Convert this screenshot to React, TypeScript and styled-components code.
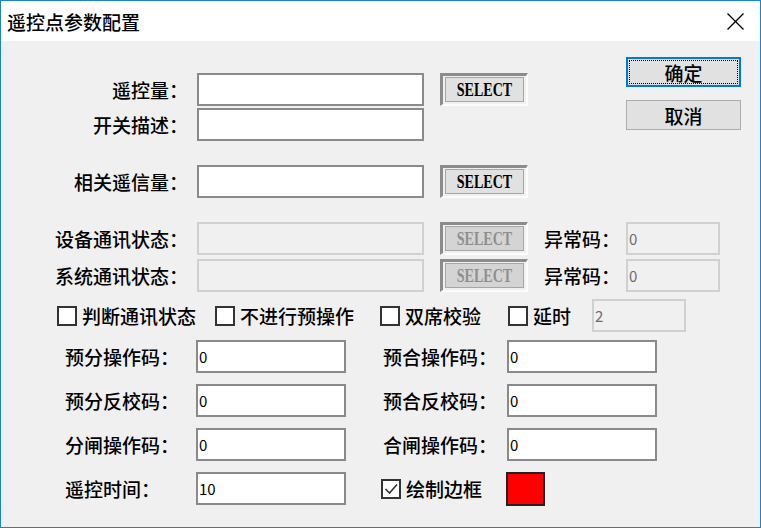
import React from "react";
import styled, { createGlobalStyle } from "styled-components";

const Global = createGlobalStyle`
  html, body { margin: 0; padding: 0; background: #fff; overflow: hidden; }
  body { font-family: "Noto Sans CJK SC", "Noto Sans", sans-serif; }
  * { box-sizing: border-box; }
`;

const CJK = `"Noto Sans CJK SC", "Noto Sans", sans-serif`;

const Window = styled.div`
  width: 761px;
  height: 528px;
  border: 1px solid #1883d7;
  background: #f0f0f0;
  display: flex;
  flex-direction: column;
  color: #000;
  font-family: ${CJK};
  font-weight: 500;
`;

const TitleBar = styled.div`
  height: 40px;
  flex-shrink: 0;
  background: #fff;
  display: flex;
  align-items: center;
  justify-content: space-between;
  padding: 0 16px 0 6px;
`;

const Title = styled.span`
  font-size: 19px;
  line-height: 1;
`;

const CloseIcon = styled.svg`
  width: 17px;
  height: 17px;
  display: block;
`;

const Body = styled.div`
  flex: 1;
  display: flex;
  flex-direction: column;
`;

const TopBlock = styled.div`
  display: flex;
  align-items: flex-start;
`;

const LeftRows = styled.div`
  display: flex;
  flex-direction: column;
  padding-top: 32px;
`;

const ButtonCol = styled.div`
  display: flex;
  flex-direction: column;
  gap: 13px;
  padding-top: 16px;
  margin-left: 98px;
`;

const Row = styled.div<{ $mt?: number; $pl?: number }>`
  display: flex;
  align-items: center;
  height: 33px;
  margin-top: ${(p) => p.$mt ?? 0}px;
  padding-left: ${(p) => p.$pl ?? 0}px;
`;

const Label = styled.span<{ $w: number; $align?: "left" | "right"; $ml?: number }>`
  flex: 0 0 ${(p) => p.$w}px;
  width: ${(p) => p.$w}px;
  margin-left: ${(p) => p.$ml ?? 0}px;
  text-align: ${(p) => p.$align ?? "left"};
  font-size: 19px;
  line-height: 33px;
  white-space: nowrap;
`;

const Field = styled.input<{ $w: number; $ml?: number }>`
  flex: 0 0 ${(p) => p.$w}px;
  width: ${(p) => p.$w}px;
  height: 33px;
  margin: 0 0 0 ${(p) => p.$ml ?? 0}px;
  border: 2px solid ${(p) => (p.disabled ? "#d0d0d0" : "#8a8a8a")};
  background: ${(p) => (p.disabled ? "#f0f0f0" : "#fff")};
  color: ${(p) => (p.disabled ? "#6d6d6d" : "#000")};
  font-family: ${CJK};
  font-weight: 400;
  font-size: 15px;
  padding: 0 0 0 1px;
  outline: none;
  border-radius: 0;
`;

const SelectFrame = styled.div<{ $ml?: number }>`
  flex: 0 0 88px;
  width: 88px;
  height: 33px;
  margin-left: ${(p) => p.$ml ?? 0}px;
  border-style: solid;
  border-width: 3px 2px 2px 3px;
  border-color: #8c8c8c #fcfcfc #fcfcfc #8c8c8c;
  padding: 1px 2px 2px 2px;
  display: flex;
`;

const SelectInner = styled.div<{ $disabled?: boolean }>`
  flex: 1;
  border: 1px solid #a6a6a6;
  background: ${(p) => (p.$disabled ? "#d4d4d4" : "#e1e1e1")};
  color: ${(p) => (p.$disabled ? "#8f8f8f" : "#000")};
  display: flex;
  align-items: center;
  justify-content: center;
  overflow: hidden;
`;

const SelectText = styled.span`
  display: inline-block;
  font-family: "Liberation Serif", "Times New Roman", serif;
  font-weight: bold;
  font-size: 18px;
  line-height: 1;
  transform: scaleX(0.78);
  white-space: nowrap;
`;

const DialogButton = styled.button<{ $default?: boolean }>`
  position: relative;
  width: 115px;
  height: 30px;
  padding: 0;
  border: ${(p) => (p.$default ? "2px solid #0078d7" : "1px solid #adadad")};
  background: #e1e1e1;
  font-family: ${CJK};
  font-weight: 500;
  font-size: 19px;
  color: #000;
  display: flex;
  align-items: center;
  justify-content: center;
  border-radius: 0;
  &::after {
    content: "";
    display: ${(p) => (p.$default ? "block" : "none")};
    position: absolute;
    inset: 1px;
    border: 1px dotted #000;
  }
`;

const CheckItem = styled.label<{ $w?: number }>`
  flex: 0 0 ${(p) => (p.$w ? `${p.$w}px` : "auto")};
  display: flex;
  align-items: center;
  gap: 5px;
  font-size: 19px;
  white-space: nowrap;
`;

const Box = styled.span`
  width: 20px;
  height: 20px;
  flex-shrink: 0;
  border: 2px solid #333;
  background: #fff;
  display: flex;
  align-items: center;
  justify-content: center;
`;

const BottomGrid = styled.div`
  display: grid;
  grid-template-columns: 131px 150px 37px 124px 150px;
  grid-template-rows: repeat(4, 33px);
  row-gap: 11px;
  align-items: center;
  margin-top: 8px;
  padding-left: 64px;
`;

const Spacer = styled.span``;

const LastCell = styled.div`
  grid-column: 4 / 6;
  display: flex;
  align-items: center;
  margin-left: -2px;
`;

const Swatch = styled.span`
  width: 39px;
  height: 34px;
  border: 2px solid #222;
  background: #ff0000;
`;

const Check = ({ checked }: { checked?: boolean }) => (
  <Box>
    {checked && (
      <svg width="16" height="16" viewBox="0 0 16 16">
        <polyline points="2.5,8 6.5,12 14,3.5" fill="none" stroke="#333" strokeWidth="1.6" />
      </svg>
    )}
  </Box>
);

const Select = ({ disabled, ml }: { disabled?: boolean; ml?: number }) => (
  <SelectFrame $ml={ml}>
    <SelectInner $disabled={disabled}>
      <SelectText>SELECT</SelectText>
    </SelectInner>
  </SelectFrame>
);

export default function App() {
  return (
    <>
      <Global />
      <Window>
        <TitleBar>
          <Title>遥控点参数配置</Title>
          <CloseIcon viewBox="0 0 17 17">
            <line x1="0.5" y1="0.5" x2="16.5" y2="16.5" stroke="#000" strokeWidth="1.2" />
            <line x1="16.5" y1="0.5" x2="0.5" y2="16.5" stroke="#000" strokeWidth="1.2" />
          </CloseIcon>
        </TitleBar>
        <Body>
          <TopBlock>
            <LeftRows>
              <Row>
                <Label $w={187} $align="right">遥控量：</Label>
                <Field $w={227} $ml={9} readOnly value="" />
                <Select ml={16} />
              </Row>
              <Row $mt={2}>
                <Label $w={187} $align="right">开关描述：</Label>
                <Field $w={227} $ml={9} readOnly value="" />
              </Row>
              <Row $mt={24}>
                <Label $w={187} $align="right">相关遥信量：</Label>
                <Field $w={227} $ml={9} readOnly value="" />
                <Select ml={16} />
              </Row>
            </LeftRows>
            <ButtonCol>
              <DialogButton $default>确定</DialogButton>
              <DialogButton>取消</DialogButton>
            </ButtonCol>
          </TopBlock>

          <Row $mt={24}>
            <Label $w={187} $align="right">设备通讯状态：</Label>
            <Field $w={227} $ml={9} disabled value="" readOnly />
            <Select ml={16} disabled />
            <Label $w={82} $ml={16}>异常码：</Label>
            <Field $w={94} disabled value="0" readOnly />
          </Row>
          <Row $mt={4}>
            <Label $w={187} $align="right">系统通讯状态：</Label>
            <Field $w={227} $ml={9} disabled value="" readOnly />
            <Select ml={16} disabled />
            <Label $w={82} $ml={16}>异常码：</Label>
            <Field $w={94} disabled value="0" readOnly />
          </Row>

          <Row $mt={7} $pl={56}>
            <CheckItem $w={158}>
              <Check />
              判断通讯状态
            </CheckItem>
            <CheckItem $w={165}>
              <Check />
              不进行预操作
            </CheckItem>
            <CheckItem $w={128}>
              <Check />
              双席校验
            </CheckItem>
            <CheckItem $w={84}>
              <Check />
              延时
            </CheckItem>
            <Field $w={94} disabled value="2" readOnly />
          </Row>

          <BottomGrid>
            <Label $w={131}>预分操作码：</Label>
            <Field $w={150} readOnly value="0" />
            <Spacer />
            <Label $w={124}>预合操作码：</Label>
            <Field $w={150} readOnly value="0" />

            <Label $w={131}>预分反校码：</Label>
            <Field $w={150} readOnly value="0" />
            <Spacer />
            <Label $w={124}>预合反校码：</Label>
            <Field $w={150} readOnly value="0" />

            <Label $w={131}>分闸操作码：</Label>
            <Field $w={150} readOnly value="0" />
            <Spacer />
            <Label $w={124}>合闸操作码：</Label>
            <Field $w={150} readOnly value="0" />

            <Label $w={131}>遥控时间：</Label>
            <Field $w={150} readOnly value="10" />
            <Spacer />
            <LastCell>
              <CheckItem $w={125}>
                <Check checked />
                绘制边框
              </CheckItem>
              <Swatch />
            </LastCell>
          </BottomGrid>
        </Body>
      </Window>
    </>
  );
}
